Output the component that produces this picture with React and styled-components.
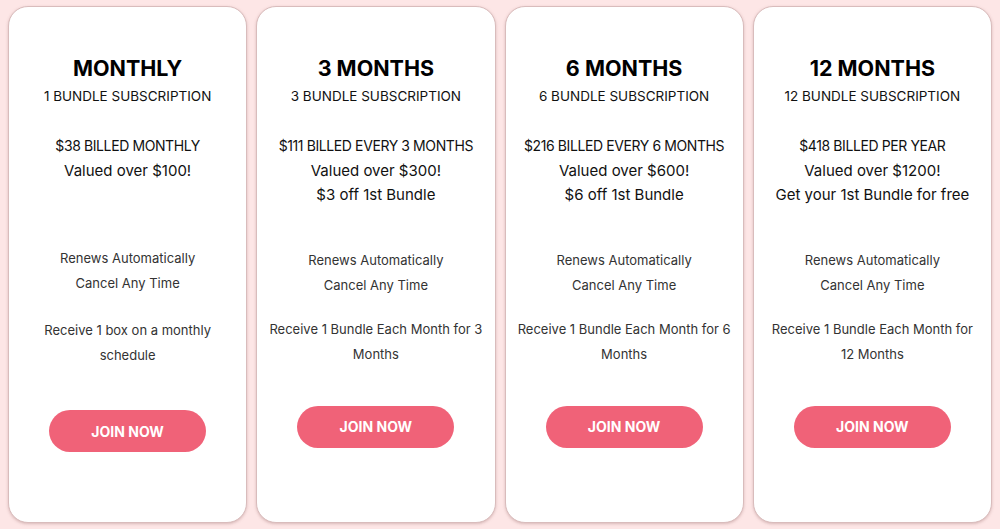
import React from "react";
import styled, { createGlobalStyle } from "styled-components";

const plans = [
  {
    title: "MONTHLY",
    bundle: "1 BUNDLE SUBSCRIPTION",
    price: ["$38 BILLED MONTHLY", "Valued over $100!"],
    receive: ["Receive 1 box on a monthly", "schedule"],
    lift: -1,
    extra: 3,
    drop: 3,
  },
  {
    title: "3 MONTHS",
    bundle: "3 BUNDLE SUBSCRIPTION",
    price: ["$111 BILLED EVERY 3 MONTHS", "Valued over $300!", "$3 off 1st Bundle"],
    receive: ["Receive 1 Bundle Each Month for 3", "Months"],
  },
  {
    title: "6 MONTHS",
    bundle: "6 BUNDLE SUBSCRIPTION",
    price: ["$216 BILLED EVERY 6 MONTHS", "Valued over $600!", "$6 off 1st Bundle"],
    receive: ["Receive 1 Bundle Each Month for 6", "Months"],
  },
  {
    title: "12 MONTHS",
    bundle: "12 BUNDLE SUBSCRIPTION",
    price: ["$418 BILLED PER YEAR", "Valued over $1200!", "Get your 1st Bundle for free"],
    receive: ["Receive 1 Bundle Each Month for", "12 Months"],
  },
];

export default function App() {
  return (
    <>
      <GlobalStyle />
      <Page>
        {plans.map((plan) => (
          <Card key={plan.title}>
            <Title>{plan.title}</Title>
            <Bundle>{plan.bundle}</Bundle>
            <Price>
              {plan.price.map((line, i) => (
                <Line key={line} $caps={i === 0}>
                  {line}
                </Line>
              ))}
            </Price>
            <Features $top={40 + (plan.lift || 0)}>
              <Line>Renews Automatically</Line>
              <Line>Cancel Any Time</Line>
            </Features>
            <Features $top={19 + (plan.extra || 0)}>
              {plan.receive.map((line) => (
                <Line key={line}>{line}</Line>
              ))}
            </Features>
            <JoinButton $top={39 + (plan.drop || 0)}>JOIN NOW</JoinButton>
          </Card>
        ))}
      </Page>
    </>
  );
}

const GlobalStyle = createGlobalStyle`
  html, body {
    margin: 0;
    background: #fde6e6;
  }
  body {
    font-family: "Inter", "Noto Sans", sans-serif;
  }
`;

const Page = styled.div`
  display: grid;
  grid-template-columns: repeat(4, 1fr);
  gap: 9px;
  padding: 6px 8px;
  height: 529px;
  box-sizing: border-box;
`;

const Card = styled.div`
  background: #fff;
  border: 1px solid #d9bcbc;
  border-radius: 20px;
  box-shadow: 0 1px 3px rgba(150, 100, 100, 0.35);
  display: flex;
  flex-direction: column;
  align-items: center;
  padding-top: 47px;
  text-align: center;
  height: 517px;
  box-sizing: border-box;
`;

const Title = styled.h2`
  margin: 0;
  font-size: 21.5px;
  line-height: 28px;
  font-weight: 700;
  color: #000;
`;

const Bundle = styled.div`
  margin-top: 2px;
  font-size: 13.5px;
  line-height: 24px;
  color: #111;
`;

const Price = styled.div`
  margin-top: 26px;
  min-height: 73px;
  font-size: 15px;
  line-height: 24.5px;
  color: #111;
`;

const Features = styled.div`
  margin-top: ${(p) => p.$top}px;
  font-size: 13px;
  line-height: 25px;
  color: #333;
`;

const Line = styled.div`
  white-space: nowrap;
  font-size: ${(p) => (p.$caps ? "14px" : "inherit")};
  letter-spacing: ${(p) => (p.$caps ? "-0.4px" : "normal")};
`;

const JoinButton = styled.button`
  margin-top: ${(p) => p.$top}px;
  width: 157px;
  height: 42px;
  border: none;
  border-radius: 21px;
  background: #f06278;
  color: #fff;
  font-family: inherit;
  font-weight: 700;
  font-size: 14px;
  cursor: pointer;
`;
